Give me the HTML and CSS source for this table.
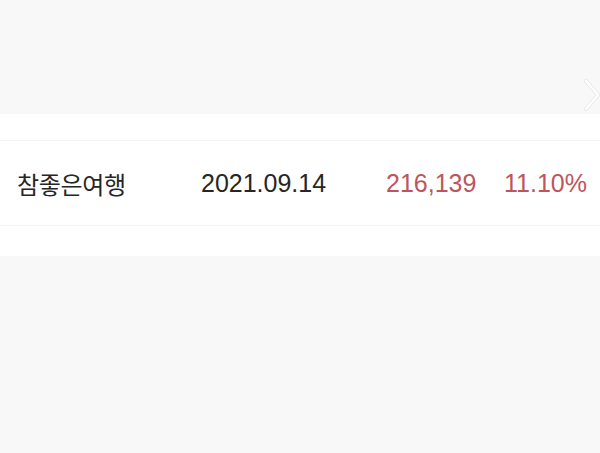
FILE: index.html
```
<!DOCTYPE html>
<html lang="ko">
<head>
    <meta charset="UTF-8">
    <meta name="viewport" content="width=device-width, initial-scale=1.0">
    <title>수익률</title>
    <link rel="stylesheet" href="styles.css">
</head>
<body>
    <div class="top">
        <!-- 다음 화살표 -->
        <svg class="next" width="18" height="36" viewBox="0 0 18 36">
            <polyline points="3,3 15,17 3,31" fill="none" stroke="#e6e6e6" stroke-width="4" stroke-linecap="round" stroke-linejoin="round"/>
            <polyline points="3,3 15,17 3,31" fill="none" stroke="#ffffff" stroke-width="2.4" stroke-linecap="round" stroke-linejoin="round"/>
        </svg>
    </div>

    <div class="panel">
        <div class="row">
            <div class="name">참좋은여행</div>
            <div class="date">2021.09.14</div>
            <div class="amount">216,139</div>
            <div class="rate">11.10%</div>
        </div>
    </div>
</body>
</html>
```

FILE: styles.css
```
body {
    margin: 0;
    background: #f8f8f8;
    font-family: 'Liberation Sans', Arial, 'Noto Sans CJK KR', sans-serif;
    height: 453px;
    overflow: hidden;
}
.top {
    position: relative;
    height: 114px;
}
.next {
    position: absolute;
    right: -1px;
    top: 78px;
}
.panel {
    background: #fff;
    padding: 26px 0 30px;
}
.row {
    display: flex;
    align-items: center;
    height: 84px;
    border-top: 1px solid #f3f3f3;
    border-bottom: 1px solid #f3f3f3;
    padding-left: 17px;
    font-size: 25px;
    color: #262626;
}
.name {
    width: 184px;
    font-family: 'Noto Sans CJK KR', sans-serif;
    font-size: 24px;
    letter-spacing: -0.3px;
}
.date {
    width: 185px;
}
.amount {
    width: 118px;
    color: #bd555c;
}
.rate {
    color: #bd555c;
}
```
